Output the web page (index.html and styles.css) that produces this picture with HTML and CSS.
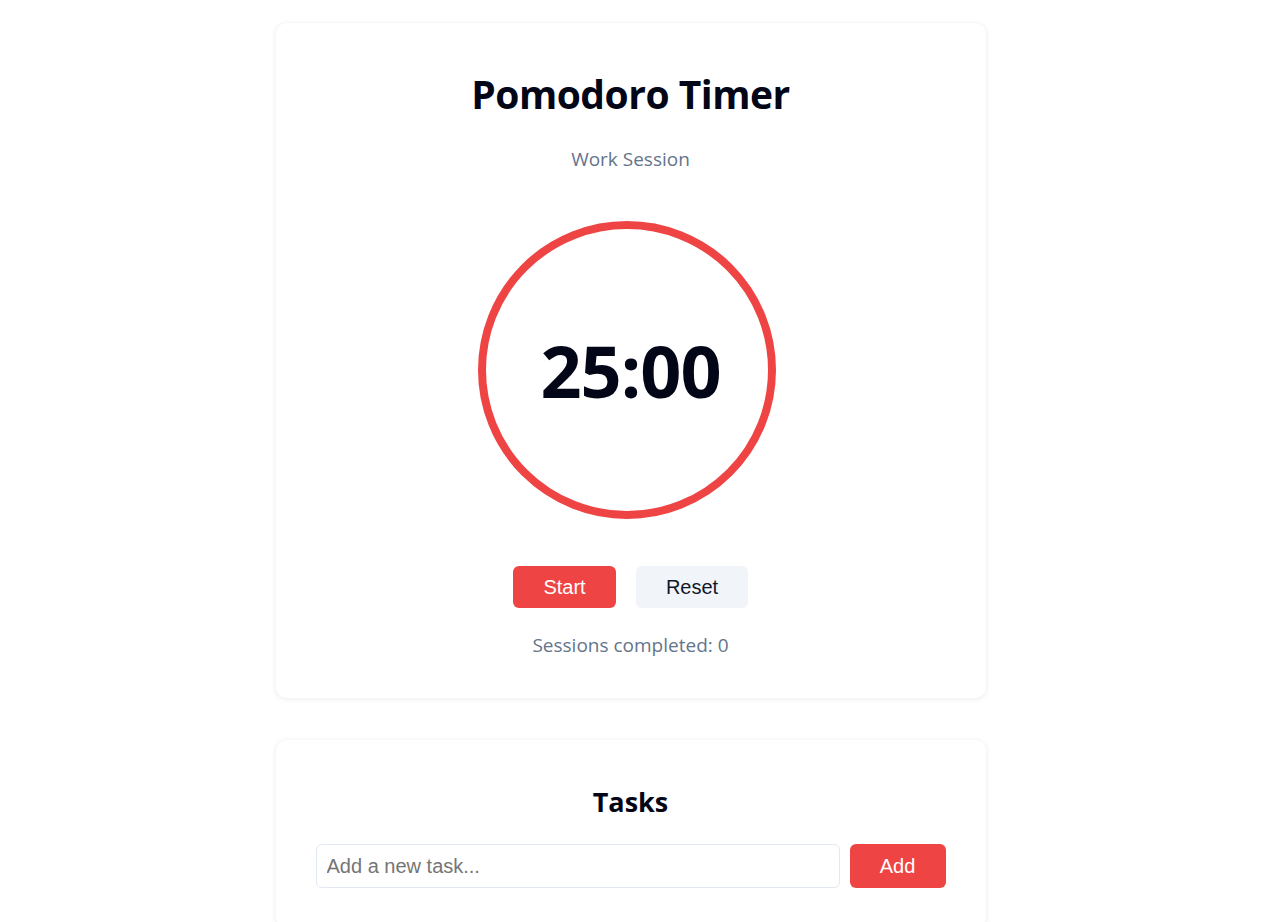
FILE: index.html
```html
<!DOCTYPE html>
<html lang="en">
<head>
<meta charset="utf-8">
<title>Pomodoro Timer</title>
<link rel="stylesheet" href="styles.css">
</head>
<body>
<main class="page">
  <section class="card timer-card">
    <h1 class="title">Pomodoro Timer</h1>
    <p class="mode">Work Session</p>
    <div class="dial-wrap">
      <div class="dial">
        <span class="time">25:00</span>
      </div>
    </div>
    <div class="controls">
      <button class="btn btn-primary btn-start">Start</button>
      <button class="btn btn-secondary btn-reset">Reset</button>
    </div>
    <p class="sessions">Sessions completed: 0</p>
  </section>
  <section class="card tasks-card">
    <h2 class="tasks-title">Tasks</h2>
    <div class="task-form">
      <input class="task-input" type="text" placeholder="Add a new task...">
      <button class="btn btn-primary btn-add">Add</button>
    </div>
  </section>
</main>
</body>
</html>
```

FILE: styles.css
```css
* { box-sizing: border-box; }
html, body { margin: 0; padding: 0; background: #ffffff; }
body {
  font-family: "Open Sans", "Noto Sans", sans-serif;
  color: #0f172a;
}
.page {
  width: 710px;
  margin: 0 auto;
  padding: 23px 0 40px;
  position: relative;
  left: -8px;
  display: flex;
  flex-direction: column;
  gap: 42px;
}
.card {
  background: #fff;
  border-radius: 10px;
  box-shadow: 0 1px 6px rgba(15, 23, 42, 0.08), 0 0 1px rgba(15, 23, 42, 0.06);
  display: flex;
  flex-direction: column;
  align-items: center;
}
.timer-card { padding: 47px 40px 40px; }
.title {
  margin: 0;
  font-size: 39px;
  line-height: 48px;
  font-weight: 700;
  letter-spacing: -0.5px;
  color: #020617;
}
.mode {
  margin: 28px 0 0;
  font-size: 19px;
  line-height: 26px;
  color: #64748b;
}
.dial-wrap {
  margin-top: 49px;
  width: 100%;
  display: flex;
  justify-content: center;
}
.dial {
  width: 298px;
  height: 298px;
  border: 8px solid #ef4444;
  border-radius: 50%;
  display: flex;
  align-items: center;
  justify-content: center;
  position: relative;
  left: -4px;
}
.time {
  font-size: 72px;
  font-weight: 700;
  color: #020617;
  line-height: 1;
  position: relative;
  left: 4px;
  letter-spacing: -1px;
}
.controls {
  margin-top: 47px;
  display: flex;
  gap: 20px;
}
.btn {
  font-family: "Liberation Sans", Arial, sans-serif;
  font-size: 20px;
  border: none;
  border-radius: 6px;
  height: 42px;
  cursor: pointer;
}
.btn-primary { background: #ef4444; color: #fff; }
.btn-secondary { background: #f1f5f9; color: #0f172a; }
.btn-start { width: 103px; }
.btn-reset { width: 112px; }
.sessions {
  margin: 24px 0 0;
  font-size: 19px;
  line-height: 26px;
  color: #64748b;
}
.tasks-card { padding: 45px 40px 40px; }
.tasks-title {
  margin: 0;
  font-size: 27px;
  line-height: 34px;
  font-weight: 700;
  color: #020617;
}
.task-form {
  margin-top: 25px;
  width: 100%;
  display: flex;
  gap: 10px;
}
.task-input {
  flex: 1;
  height: 44px;
  border: 1px solid #e2e8f0;
  border-radius: 6px;
  padding: 0 10px;
  font-family: "Liberation Sans", Arial, sans-serif;
  font-size: 20px;
  color: #0f172a;
  outline: none;
}
.task-input::placeholder { color: #757575; }
.btn-add { width: 96px; height: 44px; }
```
